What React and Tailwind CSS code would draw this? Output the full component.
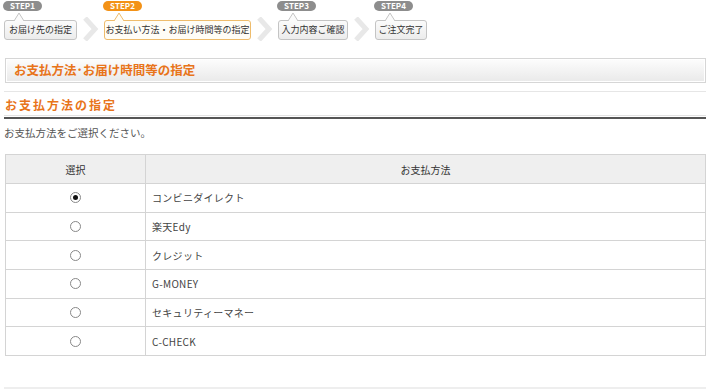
import React from 'react';

const FONT = { fontFamily: '"Noto Sans CJK JP", "Noto Sans", sans-serif' };

const steps = [
  { label: 'STEP1', text: 'お届け先の指定', width: 'w-[73px]', active: false },
  { label: 'STEP2', text: 'お支払い方法・お届け時間等の指定', width: 'w-[147px]', active: true },
  { label: 'STEP3', text: '入力内容ご確認', width: 'w-[70px]', active: false },
  { label: 'STEP4', text: 'ご注文完了', width: 'w-[52px]', active: false },
];

const methods = [
  'コンビニダイレクト',
  '楽天Edy',
  'クレジット',
  'G-MONEY',
  'セキュリティーマネー',
  'C-CHECK',
];

function Chevron() {
  return (
    <svg width="17" height="24" viewBox="0 0 17 24" className="mx-[5px] mb-[-1px]">
      <path d="M3 1 L13 12 L3 23" fill="none" stroke="#e8e8e8" strokeWidth="5" />
    </svg>
  );
}

function Step({ step }) {
  const pill = step.active ? 'bg-[#f39217]' : 'bg-[#8d8d8d]';
  const box = step.active
    ? 'border-[#eebc6c] bg-[#fffdf6]'
    : 'border-[#c4c4c4] bg-gradient-to-b from-[#fbfbfb] to-[#ececec]';
  return (
    <div className="flex flex-col">
      <div className={`h-[10px] w-[39px] rounded-full ${pill} text-white text-[8px] font-bold leading-[10px] text-center ml-[-1px]`}>
        {step.label}
      </div>
      <div className="relative mt-[9px]">
        <svg width="10" height="9" viewBox="0 0 10 9" className="absolute left-[10px] top-[-8px]">
          <path d="M0 9 L5 1 L10 9" fill={step.active ? '#fffdf6' : '#fbfbfb'} stroke={step.active ? '#eebc6c' : '#c4c4c4'} strokeWidth="1" />
        </svg>
        <div className={`${step.width} h-[20px] rounded-[3px] border ${box} text-[9px] text-[#333] leading-[18px] text-center whitespace-nowrap`}>
          {step.text}
        </div>
      </div>
    </div>
  );
}

function Radio({ checked }) {
  return (
    <span className="inline-flex w-[11px] h-[11px] rounded-full border border-[#888] bg-white items-center justify-center">
      {checked && <span className="w-[5px] h-[5px] rounded-full bg-[#111]" />}
    </span>
  );
}

export default function App() {
  return (
    <div className="w-[710px] h-[390px] bg-white overflow-hidden" style={FONT}>
      <div className="flex items-end pl-[4px] pt-[1px] h-[40px]">
        {steps.map((s, i) => (
          <React.Fragment key={s.label}>
            {i > 0 && <Chevron />}
            <Step step={s} />
          </React.Fragment>
        ))}
      </div>

      <div className="px-[5px] mt-[18px] pr-[4px]">
        <div className="h-[25px] border border-[#d6d6d6] bg-gradient-to-b from-[#fdfdfd] to-[#e9e9e9] flex items-center pl-[8px] shadow-[inset_0_0_0_1px_#ffffff]">
          <span className="text-[12.5px] font-bold text-[#e8741a]">お支払方法･お届け時間等の指定</span>
        </div>
      </div>

      <div className="mx-[4px] mt-[8px] border-t border-[#e6e6e6]" />

      <div className="mx-[4px] mt-[3px]">
        <div className="text-[12px] font-bold text-[#e8741a] tracking-[2px] leading-[20px] pl-[1px]">お支払方法の指定</div>
        <div className="border-t border-[#e2e2e2]" />
        <div className="mt-[1px] border-t-2 border-[#555]" />
      </div>

      <div className="pl-[4px] mt-[7px] text-[10.5px] text-[#555] leading-[14px]">お支払方法をご選択ください。</div>

      <div className="pl-[5px] pr-[4px] mt-[14px]">
        <table className="w-full border-collapse border border-[#d4d4d4] text-[10px] text-[#444]">
          <thead>
            <tr className="bg-[#efefef] h-[29px]">
              <th className="w-[140px] border border-[#d4d4d4] font-normal text-[#333]">選択</th>
              <th className="border border-[#d4d4d4] font-normal text-[#333]">お支払方法</th>
            </tr>
          </thead>
          <tbody>
            {methods.map((m, i) => (
              <tr key={m} className="h-[28.7px]">
                <td className="border border-[#d4d4d4] text-center align-middle">
                  <div className="flex items-center justify-center">
                    <Radio checked={i === 0} />
                  </div>
                </td>
                <td className="border border-[#d4d4d4] pl-[6px] tracking-[0.3px]">{m}</td>
              </tr>
            ))}
          </tbody>
        </table>
      </div>

      <div className="mx-[4px] mt-[31px] border-t-2 border-[#eeeeee]" />
    </div>
  );
}
